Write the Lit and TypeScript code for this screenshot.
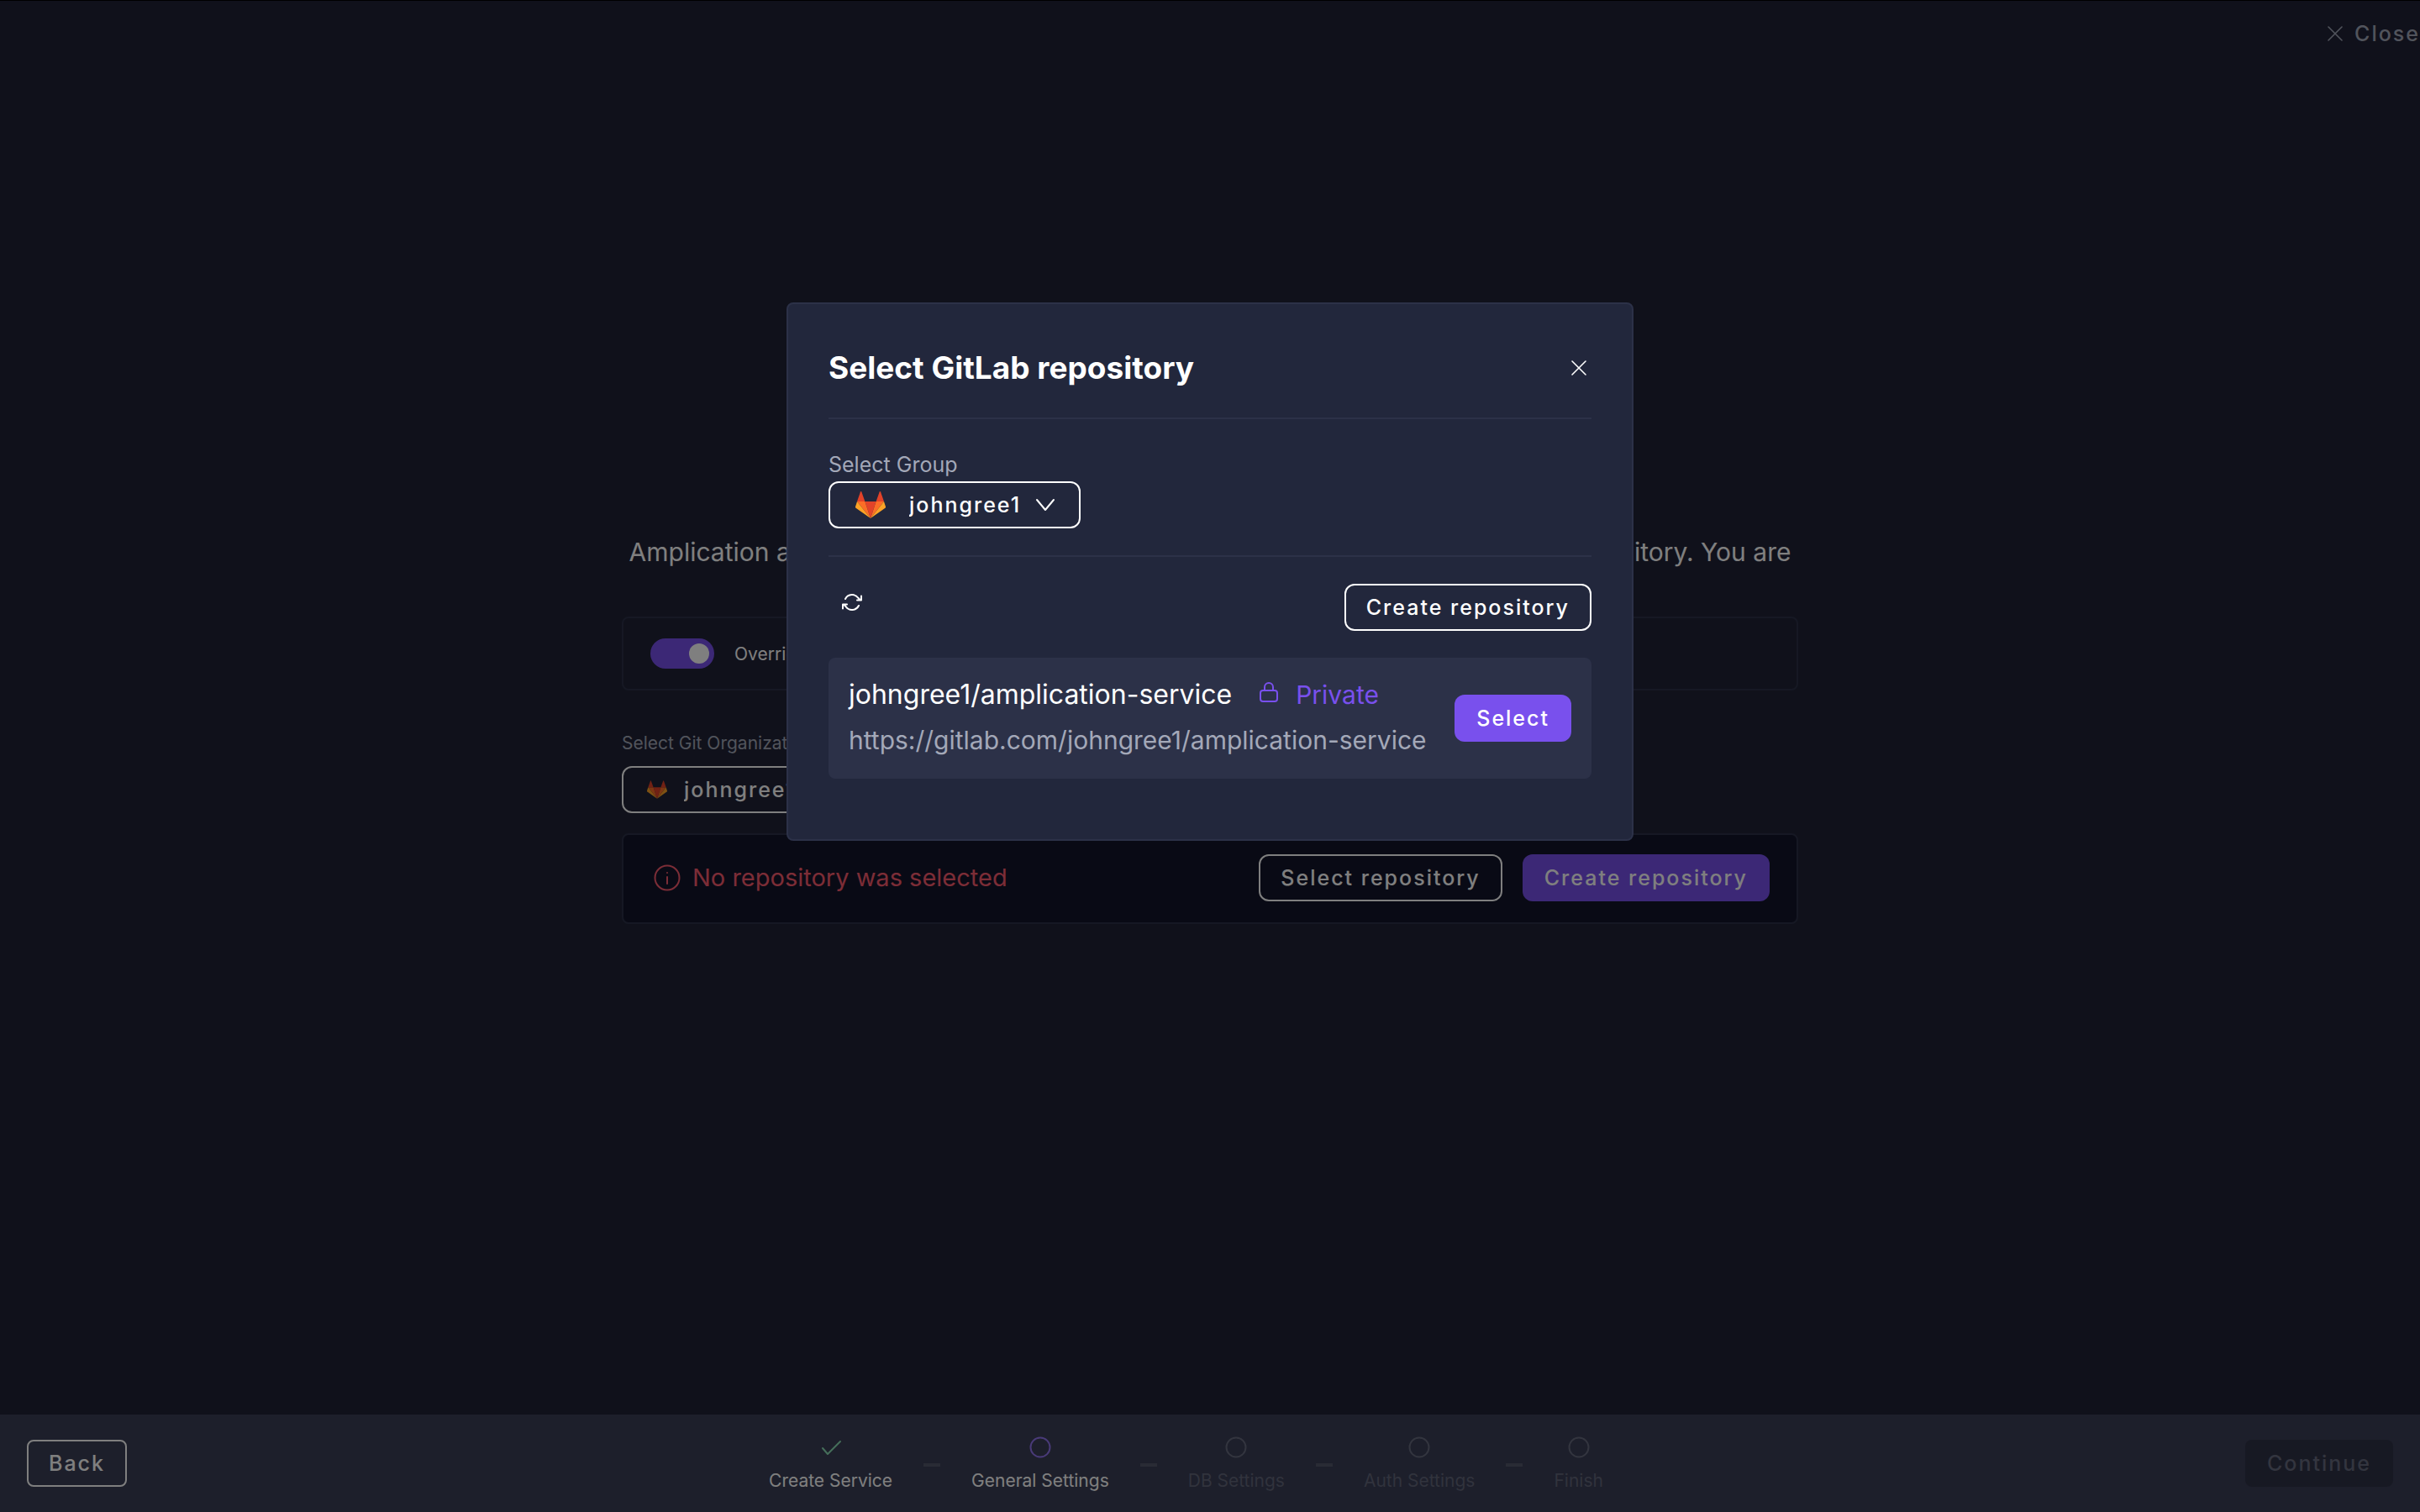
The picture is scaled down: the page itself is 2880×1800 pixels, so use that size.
import { LitElement, html, css, svg } from "lit";
import { customElement, property, state } from "lit/decorators.js";
import { classMap } from "lit/directives/class-map.js";

const gitlabLogo = () => html`
  <svg class="gitlab" viewBox="0 0 36 32" aria-hidden="true">
    <path fill="#e24329" d="M18 32 11.400 12h13.200z" />
    <path fill="#fc6d26" d="M18 32 11.400 12H2z" />
    <path fill="#fca326" d="M2 12 0 18.200a1.400 1.400 0 0 0 .5 1.500L18 32z" />
    <path fill="#e24329" d="M2 12h9.400L7.300.500a.700.700 0 0 0-1.300 0z" />
    <path fill="#fc6d26" d="M18 32 24.600 12H34z" />
    <path fill="#fca326" d="m34 12 2 6.200a1.400 1.400 0 0 1-.5 1.500L18 32z" />
    <path fill="#e24329" d="M34 12h-9.400L28.700.500a.700.700 0 0 1 1.300 0z" />
  </svg>
`;

const crossIcon = () => html`
  <svg class="cross" viewBox="0 0 18 18" aria-hidden="true">
    <path d="M1 1 17 17M17 1 1 17" fill="none" stroke="currentColor" stroke-width="1.600" stroke-linecap="round" />
  </svg>
`;

const refreshIcon = () => html`
  <svg class="refresh" viewBox="0 0 24 22" fill="none" stroke="currentColor" stroke-width="2" stroke-linecap="round" stroke-linejoin="round" aria-hidden="true">
    <path d="M4 7A9 9 0 0 1 19.500 6L22 8.500M23 3.500v5h-5" />
    <path d="M20 15A9 9 0 0 1 4.500 16L2 13.500M1 18.500v-5h5" />
  </svg>
`;

const lockIcon = () => html`
  <svg class="lock" viewBox="0 0 24 24" fill="none" stroke="currentColor" stroke-width="2" aria-hidden="true">
    <rect x="2" y="10" width="20" height="13" rx="3" />
    <path d="M7 10V6a5 5 0 0 1 10 0v4" />
  </svg>
`;

const infoIcon = () => html`
  <svg class="info" viewBox="0 0 32 32" fill="none" stroke="currentColor" stroke-width="2" aria-hidden="true">
    <circle cx="16" cy="16" r="14.500" />
    <path d="M16 15v8" stroke-linecap="round" />
    <circle cx="16" cy="10" r="1" fill="currentColor" stroke="none" />
  </svg>
`;

type StepState = "done" | "current" | "pending";
interface Step {
  name: string;
  state: StepState;
}

@customElement("group-select")
class GroupSelect extends LitElement {
  @property() label = "";
  @property() value = "";
  @property({ type: Boolean, reflect: true }) compact = false;

  static styles = css`
    :host {
      display: flex;
      flex-direction: column;
      align-items: flex-start;
      font-family: Inter, sans-serif;
    }
    .label {
      font-size: 25px;
      line-height: 36px;
      color: #a3a8b8;
      margin-bottom: 2px;
    }
    .box {
      display: flex;
      align-items: center;
      box-sizing: border-box;
      height: 56px;
      padding: 0 28px 0 30px;
      border: 2px solid #fff;
      border-radius: 12px;
      color: #fff;
    }
    .gitlab {
      width: 36px;
      height: 32px;
      margin-right: 28px;
    }
    select {
      appearance: none;
      border: 0;
      margin: 0;
      padding: 0;
      background: transparent;
      color: inherit;
      font: 500 25px/36px Inter, sans-serif;
      letter-spacing: 2px;
    }
    .chevron {
      width: 24px;
      height: 16px;
      margin-left: 16px;
    }
    :host([compact]) .label {
      font-size: 21px;
      line-height: 30px;
      margin-bottom: 12px;
    }
    :host([compact]) .box {
      padding-left: 28px;
    }
    :host([compact]) .gitlab {
      width: 24px;
      height: 22px;
      margin-right: 20px;
    }
  `;

  render() {
    return html`
      <label class="label" for="group">${this.label}</label>
      <div class="box">
        ${gitlabLogo()}
        <select id="group">
          <option>${this.value}</option>
        </select>
        <svg class="chevron" viewBox="0 0 24 16" aria-hidden="true">
          <path d="M2 2 12 14 22 2" fill="none" stroke="currentColor" stroke-width="2" stroke-linecap="round" stroke-linejoin="round" />
        </svg>
      </div>
    `;
  }
}

@customElement("wizard-steps")
class WizardSteps extends LitElement {
  @property({ attribute: false }) steps: Step[] = [];

  static styles = css`
    :host {
      display: block;
      font-family: Inter, sans-serif;
    }
    .steps {
      display: flex;
      align-items: center;
      gap: 37px;
      margin: 0;
      padding: 4px 0 0;
      list-style: none;
    }
    .step {
      display: flex;
      flex-direction: column;
      align-items: center;
      gap: 12px;
      font-size: 21px;
      line-height: 30px;
      color: #62667a;
    }
    .done,
    .current {
      color: #fff;
    }
    .mark {
      width: 26px;
      height: 26px;
      color: #666a7e;
    }
    .done .mark {
      color: #8adcb4;
    }
    .current .mark {
      color: #9274f0;
    }
    .dash {
      width: 20px;
      height: 4px;
      background: #53566a;
    }
  `;

  render() {
    return html`
      <ol class="steps">
        ${this.steps.map(
          (step, index) => html`
            ${index > 0 ? html`<li class="dash" aria-hidden="true"></li>` : ""}
            <li class=${classMap({ step: true, [step.state]: true })}>
              <svg class="mark" viewBox="0 0 26 26" fill="none" stroke="currentColor" stroke-width="2" aria-hidden="true">
                ${step.state === "done"
                  ? svg`<path d="M3 14 9 21 24 6" stroke-linecap="round" stroke-linejoin="round" />`
                  : svg`<circle cx="13" cy="13" r="11.500" />`}
              </svg>
              <span>${step.name}</span>
            </li>
          `
        )}
      </ol>
    `;
  }
}

@customElement("app-root")
class AppRoot extends LitElement {
  @state() private steps: Step[] = [
    { name: "Create Service", state: "done" },
    { name: "General Settings", state: "current" },
    { name: "DB Settings", state: "pending" },
    { name: "Auth Settings", state: "pending" },
    { name: "Finish", state: "pending" },
  ];

  static styles = css`
    :host {
      display: block;
      font-family: Inter, sans-serif;
      color: #fff;
    }
    .page {
      display: flex;
      flex-direction: column;
      box-sizing: border-box;
      min-height: 100vh;
      background: #212336;
      border-top: 1px solid #000;
      overflow: hidden;
    }
    button {
      box-sizing: border-box;
      height: 56px;
      padding: 0 24px;
      border: 2px solid transparent;
      border-radius: 12px;
      background: transparent;
      color: #fff;
      font: 500 25px/36px Inter, sans-serif;
      letter-spacing: 2px;
      white-space: nowrap;
    }
    .outline {
      border-color: #fff;
    }
    .primary {
      background: #7950ed;
    }
    .topbar {
      display: flex;
      justify-content: flex-end;
      padding-top: 11px;
    }
    .close-page {
      display: flex;
      align-items: center;
      gap: 14px;
      padding: 0;
      border: 0;
      color: #a3a8b8;
    }
    .cross {
      width: 18px;
      height: 18px;
    }
    main {
      flex: 1;
      display: flex;
      flex-direction: column;
      align-self: center;
      justify-content: center;
      box-sizing: border-box;
      width: 1400px;
      max-width: 100%;
      padding-bottom: 16px;
    }
    .intro {
      margin: 0 0 56px;
      text-align: center;
      font-size: 30px;
      line-height: 42px;
    }
    .override {
      display: flex;
      align-items: center;
      gap: 24px;
      box-sizing: border-box;
      height: 88px;
      margin-bottom: 48px;
      padding: 0 32px;
      border: 2px solid #2c3148;
      border-radius: 8px;
      font-size: 21px;
    }
    .toggle {
      appearance: none;
      display: flex;
      align-items: center;
      justify-content: flex-end;
      box-sizing: border-box;
      width: 76px;
      height: 36px;
      margin: 0;
      padding: 6px;
      border-radius: 18px;
      background: #7950ed;
    }
    .toggle::before {
      content: "";
      width: 24px;
      height: 24px;
      border-radius: 50%;
      background: #fff;
    }
    .repository {
      display: flex;
      align-items: center;
      gap: 24px;
      box-sizing: border-box;
      height: 108px;
      margin-top: 24px;
      padding: 0 32px 2px 36px;
      border: 2px solid #2c3148;
      border-radius: 8px;
      background: #13152a;
    }
    .missing {
      flex: 1;
      display: flex;
      align-items: center;
      gap: 14px;
      color: #f85b6e;
      font-size: 29px;
      line-height: 42px;
    }
    .info {
      width: 32px;
      height: 32px;
    }
    .footer {
      display: flex;
      align-items: center;
      justify-content: space-between;
      box-sizing: border-box;
      height: 116px;
      padding: 0 32px;
      background: #3a3e56;
    }
    .footer button {
      border-radius: 8px;
    }
    .footer .next {
      background: #2f3247;
      color: #666a7e;
    }
    .overlay {
      position: fixed;
      inset: 0;
      display: flex;
      align-items: flex-start;
      justify-content: center;
      padding-top: 20vh;
      background: rgba(0, 0, 0, 0.5);
    }
    .modal {
      box-sizing: border-box;
      width: 35vw;
      min-width: 1008px;
      padding: 48px 48px 72px;
      border: 2px solid #2c3148;
      border-radius: 8px;
      background: #22273c;
    }
    .modal-head {
      display: flex;
      align-items: center;
      justify-content: space-between;
      padding: 0 6px 32px 0;
      border-bottom: 2px solid #2c3148;
    }
    h2 {
      margin: 0;
      font-size: 37px;
      line-height: 55px;
      font-weight: 700;
    }
    .icon-button {
      display: flex;
      align-items: center;
      height: 44px;
      padding: 0;
      border: 0;
    }
    .group-row {
      padding: 36px 0 32px;
      border-bottom: 2px solid #2c3148;
    }
    .tools {
      display: flex;
      align-items: flex-start;
      justify-content: space-between;
      padding: 32px 0 32px 16px;
    }
    .refresh {
      width: 24px;
      height: 22px;
    }
    .repo {
      display: flex;
      align-items: center;
      justify-content: space-between;
      box-sizing: border-box;
      height: 144px;
      padding: 0 24px;
      border-radius: 8px;
      background: #2c3148;
      font-size: 30px;
      line-height: 54px;
    }
    .repo-text {
      padding-bottom: 2px;
    }
    .repo-title {
      display: flex;
      align-items: center;
    }
    .repo-name {
      font-size: 32px;
    }
    .lock {
      width: 24px;
      height: 24px;
      margin: 0 20px 6px 32px;
      color: #7950ed;
    }
    .private {
      color: #7950ed;
    }
    .url {
      display: block;
      color: #a3a8b8;
      text-decoration: none;
    }
  `;

  render() {
    return html`
      <div class="page">
        <header class="topbar">
          <button class="close-page">${crossIcon()}Close</button>
        </header>
        <main>
          <p class="intro">
            Amplication automatically pushes the generated code of your services to a Git repository. You are
          </p>
          <div class="override">
            <input class="toggle" id="override" type="checkbox" role="switch" checked />
            <label for="override">Override default settings</label>
          </div>
          <group-select compact label="Select Git Organization" value="johngree1"></group-select>
          <section class="repository">
            <div class="missing">${infoIcon()}No repository was selected</div>
            <button class="outline">Select repository</button>
            <button class="primary">Create repository</button>
          </section>
        </main>
        <footer class="footer">
          <button class="outline">Back</button>
          <wizard-steps .steps=${this.steps}></wizard-steps>
          <button class="next" disabled>Continue</button>
        </footer>
      </div>
      <div class="overlay">
        <section class="modal" role="dialog" aria-modal="true" aria-labelledby="title">
          <div class="modal-head">
            <h2 id="title">Select GitLab repository</h2>
            <button class="icon-button" aria-label="Close dialog">${crossIcon()}</button>
          </div>
          <div class="group-row">
            <group-select label="Select Group" value="johngree1"></group-select>
          </div>
          <div class="tools">
            <button class="icon-button" aria-label="Refresh">${refreshIcon()}</button>
            <button class="outline">Create repository</button>
          </div>
          <article class="repo">
            <div class="repo-text">
              <div class="repo-title">
                <span class="repo-name">johngree1/amplication-service</span>
                ${lockIcon()}
                <span class="private">Private</span>
              </div>
              <a class="url" href="https://gitlab.com/johngree1/amplication-service">https://gitlab.com/johngree1/amplication-service</a>
            </div>
            <button class="primary">Select</button>
          </article>
        </section>
      </div>
    `;
  }
}
